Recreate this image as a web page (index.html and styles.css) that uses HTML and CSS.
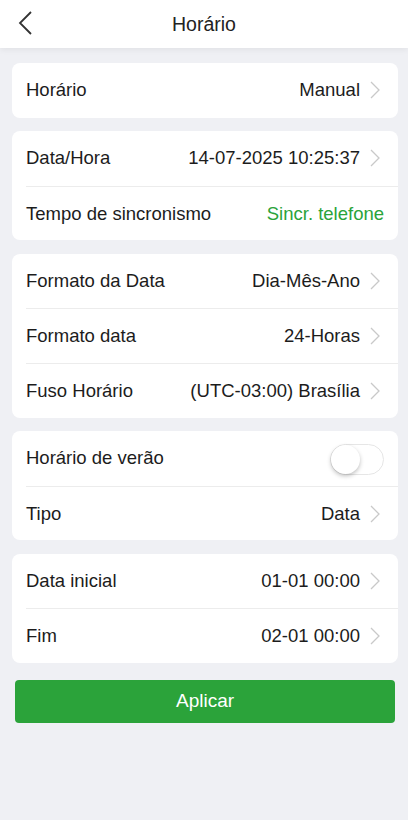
FILE: index.html
```html
<!DOCTYPE html>
<html lang="pt">
<head>
<meta charset="utf-8">
<title>Horário</title>
<link rel="stylesheet" href="styles.css">
</head>
<body>
<header class="topbar">
  <svg class="back" width="16" height="24" viewBox="0 0 16 24"><path d="M13 1 L2 12 L13 23" fill="none" stroke="#333" stroke-width="1.8"/></svg>
  <h1 class="title">Horário</h1>
</header>
<main class="content">
  <section class="card">
    <div class="row"><span class="label">Horário</span><span class="value">Manual</span><svg class="chev" width="14" height="18" viewBox="0 0 14 18"><path d="M1 1 L9 9 L1 17" fill="none" stroke="#c9c9c9" stroke-width="1.3"/></svg></div>
  </section>
  <section class="card">
    <div class="row"><span class="label">Data/Hora</span><span class="value">14-07-2025 10:25:37</span><svg class="chev" width="14" height="18" viewBox="0 0 14 18"><path d="M1 1 L9 9 L1 17" fill="none" stroke="#c9c9c9" stroke-width="1.3"/></svg></div>
    <div class="row"><span class="label">Tempo de sincronismo</span><span class="value green">Sincr. telefone</span></div>
  </section>
  <section class="card">
    <div class="row"><span class="label">Formato da Data</span><span class="value">Dia-Mês-Ano</span><svg class="chev" width="14" height="18" viewBox="0 0 14 18"><path d="M1 1 L9 9 L1 17" fill="none" stroke="#c9c9c9" stroke-width="1.3"/></svg></div>
    <div class="row"><span class="label">Formato data</span><span class="value">24-Horas</span><svg class="chev" width="14" height="18" viewBox="0 0 14 18"><path d="M1 1 L9 9 L1 17" fill="none" stroke="#c9c9c9" stroke-width="1.3"/></svg></div>
    <div class="row"><span class="label">Fuso Horário</span><span class="value">(UTC-03:00) Brasília</span><svg class="chev" width="14" height="18" viewBox="0 0 14 18"><path d="M1 1 L9 9 L1 17" fill="none" stroke="#c9c9c9" stroke-width="1.3"/></svg></div>
  </section>
  <section class="card">
    <div class="row"><span class="label">Horário de verão</span><span class="toggle"><span class="knob"></span></span></div>
    <div class="row"><span class="label">Tipo</span><span class="value">Data</span><svg class="chev" width="14" height="18" viewBox="0 0 14 18"><path d="M1 1 L9 9 L1 17" fill="none" stroke="#c9c9c9" stroke-width="1.3"/></svg></div>
  </section>
  <section class="card">
    <div class="row"><span class="label">Data inicial</span><span class="value">01-01 00:00</span><svg class="chev" width="14" height="18" viewBox="0 0 14 18"><path d="M1 1 L9 9 L1 17" fill="none" stroke="#c9c9c9" stroke-width="1.3"/></svg></div>
    <div class="row"><span class="label">Fim</span><span class="value">02-01 00:00</span><svg class="chev" width="14" height="18" viewBox="0 0 14 18"><path d="M1 1 L9 9 L1 17" fill="none" stroke="#c9c9c9" stroke-width="1.3"/></svg></div>
  </section>
  <button class="apply">Aplicar</button>
</main>
</body>
</html>
```
FILE: styles.css
```css
* { box-sizing: border-box; }
html, body {
  margin: 0;
  padding: 0;
  background: #eff0f4;
  font-family: "Liberation Sans", Arial, sans-serif;
  color: #1c1c1c;
}
body { width: 408px; min-height: 820px; }
.topbar {
  position: relative;
  height: 48px;
  background: #fff;
  display: flex;
  align-items: center;
  justify-content: center;
  box-shadow: 0 2px 6px rgba(0,0,0,0.06);
}
.back {
  position: absolute;
  left: 18px;
  top: 11px;
}
.title {
  margin: 0;
  font-size: 19.5px;
  font-weight: normal;
  color: #222;
}
.content {
  padding: 15px 10px 0 12px;
  display: flex;
  flex-direction: column;
  gap: 13.3px;
}
.card {
  background: #fff;
  border-radius: 8px;
  overflow: hidden;
}
.row {
  height: 54.7px;
  margin-left: 14px;
  padding-right: 14px;
  display: flex;
  align-items: center;
  border-top: 1px solid #ececec;
  font-size: 18.5px;
}
.row:first-child { border-top: none; }
.label { flex: 1; }
.value { color: #1c1c1c; }
.green { color: #2aa33a; }
.chev { margin-left: 10px; }
.toggle {
  width: 54px;
  height: 31px;
  border: 1px solid #e6e6e6;
  border-radius: 16px;
  background: #fff;
  position: relative;
  margin-top: 2px;
}
.knob {
  position: absolute;
  left: 0;
  top: 0;
  width: 29px;
  height: 29px;
  border-radius: 50%;
  background: #fff;
  box-shadow: 0 2px 4px rgba(0,0,0,0.25);
}
.apply {
  margin: 3.5px 3px 0 3px;
  height: 43px;
  border: none;
  border-radius: 4px;
  background: #2ba33a;
  color: #fff;
  font-family: "Liberation Sans", Arial, sans-serif;
  font-size: 19px;
}
```
